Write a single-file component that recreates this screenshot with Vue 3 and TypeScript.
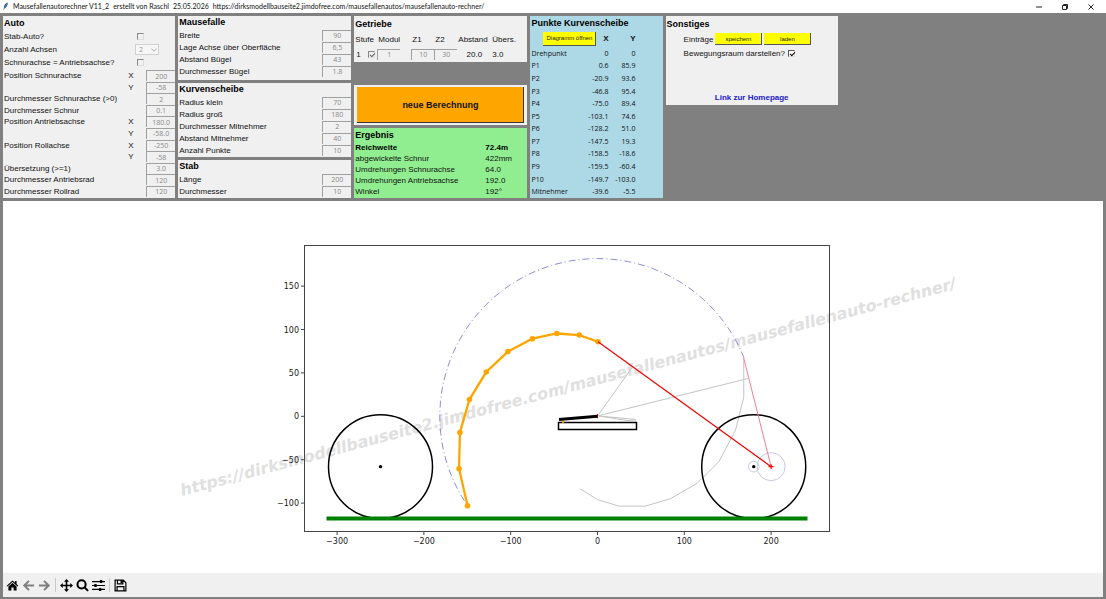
<script setup lang="ts">
import { ref } from 'vue'

interface Field {
  id: string
  label: string
  axis?: string
  value: string
}

interface Result {
  label: string
  value: string
  strong?: boolean
}

type Point = [number, number]

const auto = ref<Field[]>([
  { id: 'schnur-x', label: 'Position Schnurachse', axis: 'X', value: '200' },
  { id: 'schnur-y', label: '', axis: 'Y', value: '-58' },
  { id: 'd-schnurachse', label: 'Durchmesser Schnurachse (>0)', value: '2' },
  { id: 'd-schnur', label: 'Durchmesser Schnur', value: '0.1' },
  { id: 'antrieb-x', label: 'Position Antriebsachse', axis: 'X', value: '180.0' },
  { id: 'antrieb-y', label: '', axis: 'Y', value: '-58.0' },
  { id: 'roll-x', label: 'Position Rollachse', axis: 'X', value: '-250' },
  { id: 'roll-y', label: '', axis: 'Y', value: '-58' },
  { id: 'uebersetzung', label: 'Übersetzung (>=1)', value: '3.0' },
  { id: 'd-antrieb', label: 'Durchmesser Antriebsrad', value: '120' },
  { id: 'd-roll', label: 'Durchmesser Rollrad', value: '120' },
])

const groups = ref<{ title: string; fields: Field[] }[]>([
  {
    title: 'Mausefalle',
    fields: [
      { id: 'breite', label: 'Breite', value: '90' },
      { id: 'lage', label: 'Lage Achse über Oberfläche', value: '6,5' },
      { id: 'abstand-buegel', label: 'Abstand Bügel', value: '43' },
      { id: 'd-buegel', label: 'Durchmesser Bügel', value: '1.8' },
    ],
  },
  {
    title: 'Kurvenscheibe',
    fields: [
      { id: 'r-klein', label: 'Radius klein', value: '70' },
      { id: 'r-gross', label: 'Radius groß', value: '180' },
      { id: 'd-mitnehmer', label: 'Durchmesser Mitnehmer', value: '2' },
      { id: 'a-mitnehmer', label: 'Abstand Mitnehmer', value: '40' },
      { id: 'punkte', label: 'Anzahl Punkte', value: '10' },
    ],
  },
  {
    title: 'Stab',
    fields: [
      { id: 'laenge', label: 'Länge', value: '200' },
      { id: 'd-stab', label: 'Durchmesser', value: '10' },
    ],
  },
])

const results: Result[] = [
  { label: 'Reichweite', value: '72.4m', strong: true },
  { label: 'abgewickelte Schnur', value: '422mm' },
  { label: 'Umdrehungen Schnurachse', value: '64.0' },
  { label: 'Umdrehungen Antriebsachse', value: '192.0' },
  { label: 'Winkel', value: '192°' },
]

const curve: Point[] = [
  [0.6, 85.9],
  [-20.9, 93.6],
  [-46.8, 95.4],
  [-75.0, 89.4],
  [-103.1, 74.6],
  [-128.2, 51.0],
  [-147.5, 19.3],
  [-158.5, -18.6],
  [-159.5, -60.4],
  [-149.7, -103.0],
]

const rows = [
  { name: 'Drehpunkt', x: '0', y: '0' },
  ...curve.map(([x, y], i) => ({ name: `P${i + 1}`, x: x.toFixed(1), y: y.toFixed(1) })),
  { name: 'Mitnehmer', x: '-39.6', y: '-5.5' },
]

const stabAuto = ref(false)
const gleicheAchse = ref(false)
const achsen = ref('2')
const stufe = ref(true)
const modul = ref('1')
const z1 = ref('10')
const z2 = ref('30')
const bewegungsraum = ref(true)

/* Data units to drawing units */
const scale = 0.868
const px = (x: number): number => 594.5 + x * scale
const py = (y: number): number => 215.3 - y * scale
const line = (pts: Point[]): string => pts.map(([x, y]) => `${px(x)},${py(y)}`).join(' ')

const xTicks = [-300, -200, -100, 0, 100, 200]
const yTicks = [150, 100, 50, 0, -50, -100]
const tickText = (n: number): string => (n < 0 ? `\u2212${-n}` : `${n}`)

const armRange: Point[] = [
  [168.5, 67], [168.5, 22], [159, -16], [140, -52], [115, -77],
  [84, -95], [55, -103.5], [25, -103.5], [0, -96], [-20, -83.5],
]

/* Path of the outermost point while the disc turns around the origin */
const sweep: Point[] = Array.from({ length: 65 }, (_, i) => {
  const a = ((21.7 + i * 3) * Math.PI) / 180
  return [181.7 * Math.cos(a), 181.7 * Math.sin(a)]
})
</script>

<template>
  <div class="window">
    <header class="titlebar">
      <svg class="feather" viewBox="0 0 8 10" aria-hidden="true">
        <path d="M6.6.4C4 1.200 2 3.600 2 6.800L1.600 9.600 2.600 7.600C5 6.600 6.800 3.400 6.600.4Z" fill="#1d4f86" />
        <path d="M5.800 1.600 2.400 7.400" stroke="#9cc3e8" stroke-width=".5" />
      </svg>
      <span class="app-name">Mausefallenautorechner V11_2</span>
      <span class="app-author">erstellt von Raschl</span>
      <span class="app-date">25.05.2026</span>
      <span>https://dirksmodellbauseite2.jimdofree.com/mausefallenautos/mausefallenauto-rechner/</span>
      <div class="controls">
        <button type="button" aria-label="Minimieren">
          <svg viewBox="0 0 8 8"><path d="M1 4H7" /></svg>
        </button>
        <button type="button" aria-label="Wiederherstellen">
          <svg viewBox="0 0 8 8"><path d="M1.500 2.500H5.500V6.500H1.500ZM2.500 2.500V1.500H6.500V5.500H5.500" /></svg>
        </button>
        <button type="button" aria-label="Schließen">
          <svg viewBox="0 0 8 8"><path d="M1.500 1.500 6.500 6.500M6.500 1.500 1.500 6.500" /></svg>
        </button>
      </div>
    </header>

    <main class="panels">
      <section class="panel auto">
        <h2>Auto</h2>
        <div class="row option">
          <label for="stab-auto">Stab-Auto?</label>
          <input id="stab-auto" v-model="stabAuto" class="tick dim" type="checkbox" />
        </div>
        <div class="row option">
          <label for="achsen">Anzahl Achsen</label>
          <span class="combo">
            <select id="achsen" v-model="achsen">
              <option>2</option>
              <option>3</option>
            </select>
            <svg viewBox="0 0 6 4" aria-hidden="true"><path d="M.5.8 3 3.200 5.500.8" /></svg>
          </span>
        </div>
        <div class="row option">
          <label for="gleich">Schnurachse = Antriebsachse?</label>
          <input id="gleich" v-model="gleicheAchse" class="tick dim" type="checkbox" />
        </div>
        <div class="auto-fields">
          <div v-for="f in auto" :key="f.id" class="row">
            <label :for="f.id" class="grow">{{ f.label }}</label>
            <label v-if="f.axis" :for="f.id" class="axis">{{ f.axis }}</label>
            <input :id="f.id" v-model="f.value" class="entry" type="text" />
          </div>
        </div>
      </section>

      <div class="column">
        <section v-for="g in groups" :key="g.title" class="panel group">
          <h2>{{ g.title }}</h2>
          <div v-for="f in g.fields" :key="f.id" class="row">
            <label :for="f.id" class="grow">{{ f.label }}</label>
            <input :id="f.id" v-model="f.value" class="entry" type="text" />
          </div>
        </section>
      </div>

      <div class="column">
        <section class="panel gears">
          <h2>Getriebe</h2>
          <table>
            <colgroup>
              <col class="c-stufe" /><col class="c-modul" /><col class="c-z" /><col class="c-z" /><col class="c-abstand" /><col />
            </colgroup>
            <thead>
              <tr>
                <th>Stufe</th>
                <th>Modul</th>
                <th>Z1</th>
                <th>Z2</th>
                <th>Abstand</th>
                <th>Übers.</th>
              </tr>
            </thead>
            <tbody>
              <tr>
                <td><label class="stage">1 <input v-model="stufe" class="tick soft" type="checkbox" /></label></td>
                <td><input v-model="modul" class="entry" type="text" aria-label="Modul" /></td>
                <td><input v-model="z1" class="entry" type="text" aria-label="Z1" /></td>
                <td><input v-model="z2" class="entry" type="text" aria-label="Z2" /></td>
                <td class="mid">20.0</td>
                <td>3.0</td>
              </tr>
            </tbody>
          </table>
        </section>

        <div class="panel action">
          <button type="button" class="calc">neue Berechnung</button>
        </div>

        <section class="panel result">
          <h2>Ergebnis</h2>
          <dl>
            <div v-for="r in results" :key="r.label" :class="{ strong: r.strong }">
              <dt>{{ r.label }}</dt>
              <dd>{{ r.value }}</dd>
            </div>
          </dl>
        </section>
      </div>

      <section class="panel points">
        <h2>Punkte Kurvenscheibe</h2>
        <table>
          <colgroup>
            <col class="p-name" /><col class="p-gap" /><col class="p-x" /><col class="p-y" /><col />
          </colgroup>
          <thead>
            <tr>
              <th colspan="2"><button type="button" class="yellow">Diagramm öffnen</button></th>
              <th>X</th>
              <th>Y</th>
              <td></td>
            </tr>
          </thead>
          <tbody>
            <tr v-for="r in rows" :key="r.name">
              <th scope="row">{{ r.name }}</th>
              <td colspan="2">{{ r.x }}</td>
              <td>{{ r.y }}</td>
              <td></td>
            </tr>
          </tbody>
        </table>
      </section>

      <section class="panel misc">
        <h2>Sonstiges</h2>
        <div class="misc-row">
          <span>Einträge</span>
          <button type="button" class="yellow wide">speichern</button>
          <button type="button" class="yellow wide">laden</button>
        </div>
        <div class="misc-row">
          <label for="raum">Bewegungsraum darstellen?</label>
          <input id="raum" v-model="bewegungsraum" class="tick" type="checkbox" />
        </div>
        <a href="#homepage">Link zur Homepage</a>
      </section>
    </main>

    <section class="plot">
      <svg class="chart" viewBox="0 0 1100 372" role="img" aria-label="Mausefallenauto">
        <text class="watermark" transform="translate(179 295) rotate(-15)">https://dirksmodellbauseite2.jimdofree.com/mausefallenautos/mausefallenauto-rechner/</text>

        <g class="thin">
          <polyline :points="line(armRange)" />
          <path d="M594.500 215 629 166.700M594.500 215 745 177.500M596 215 633 218.500M596 215 624 219.500 633 219" />
        </g>
        <polyline class="reach" :points="line(sweep)" />

        <g class="wheel">
          <circle :cx="px(-250)" :cy="py(-58)" r="52" />
          <circle :cx="px(180)" :cy="py(-58)" r="52" />
        </g>
        <circle :cx="px(-250)" :cy="py(-58)" r="1.700" />
        <circle :cx="px(180)" :cy="py(-58)" r="1.700" />
        <g class="gear">
          <circle :cx="px(180)" :cy="py(-58)" r="5.300" />
          <circle :cx="px(200)" :cy="py(-58)" r="14" />
        </g>
        <path class="ground" d="M323.500 317.500H804.500" />

        <rect class="base" x="555.500" y="221.500" width="78" height="7" />
        <circle cx="560" cy="220.700" r="1.300" fill="orange" />
        <path class="bail" d="M556 218.500 594.500 215.200" />
        <path d="M594.500 213.200V217.200" stroke="#800" stroke-width="1" />

        <polyline class="disc" :points="line(curve)" />
        <circle v-for="(p, i) in curve" :key="i" :cx="px(p[0])" :cy="py(p[1])" r="2.800" fill="orange" />

        <polyline class="cord faint" :points="line([[168.5, 67], [200, -58]])" />
        <polyline class="cord" :points="line([[0.6, 85.9], [200, -58]])" />
        <path class="cross" :d="`M${px(200) - 2.5} ${py(-58)}h5m-2.500-2.500v5`" />

        <rect class="frame" x="301.500" y="44.500" width="525" height="286" />
        <g v-for="t in xTicks" :key="`x${t}`" class="tick-mark">
          <path :d="`M${px(t)} 331v3`" />
          <text :x="px(t)" y="343" text-anchor="middle">{{ tickText(t) }}</text>
        </g>
        <g v-for="t in yTicks" :key="`y${t}`" class="tick-mark">
          <path :d="`M301 ${py(t)}h-3`" />
          <text x="296" :y="py(t) + 3" text-anchor="end">{{ tickText(t) }}</text>
        </g>
      </svg>

      <nav class="toolbar" aria-label="Diagramm">
        <button type="button" aria-label="Ausgangsansicht">
          <svg viewBox="0 0 14 14"><path d="M7 1.500 .8 7.200 1.600 8 7 3.200 12.400 8 13.200 7.200 11.400 5.500V2.200H9.800V4ZM7 4.200 2.600 8.100V12.500H5.800V9.200H8.200V12.500H11.400V8.100Z" /></svg>
        </button>
        <button type="button" aria-label="Zurück" class="off">
          <svg viewBox="0 0 14 14"><path class="ln" d="M13 7H3M7.500 2 2.500 7 7.500 12" /></svg>
        </button>
        <button type="button" aria-label="Vor" class="off">
          <svg viewBox="0 0 14 14"><path class="ln" d="M1 7H11M6.500 2 11.500 7 6.500 12" /></svg>
        </button>
        <i></i>
        <button type="button" aria-label="Verschieben">
          <svg viewBox="0 0 14 14"><path d="M7 0 9.700 3H7.900V6.100H11V4.300L14 7 11 9.700V7.900H7.900V11H9.700L7 14 4.300 11H6.100V7.900H3V9.700L0 7 3 4.300V6.100H6.100V3H4.300Z" /></svg>
        </button>
        <button type="button" aria-label="Zoom">
          <svg viewBox="0 0 14 14"><circle class="ln" cx="6" cy="5.800" r="4.400" /><path class="ln" d="M9.200 9 13 12.800" /></svg>
        </button>
        <button type="button" aria-label="Einstellungen">
          <svg viewBox="0 0 14 14"><path d="M0 2.200H14V3.400H0ZM0 6.400H14V7.600H0ZM0 10.600H14V11.800H0ZM8.500 1.200H11V4.400H8.500ZM2.500 5.400H5V8.600H2.500ZM7.500 9.600H10V12.800H7.500Z" /></svg>
        </button>
        <i></i>
        <button type="button" aria-label="Speichern">
          <svg viewBox="0 0 14 14"><path class="th" d="M1.200 1.200H10L12.800 4V12.800H1.200ZM3.700 1.200V5.200H9.500V1.200M3.300 12.800V8.300H10.700V12.800" /><path d="M7 1.500H9V4.500H7Z" /></svg>
        </button>
      </nav>
    </section>
  </div>
</template>

<style>
body {
  margin: 0;
  background: #808080;
}
</style>

<style scoped>
* {
  box-sizing: border-box;
}

.window {
  display: flex;
  flex-direction: column;
  min-height: 100vh;
  background: #808080;
  color: #111;
  font: 8px/11px "Liberation Sans", Arial, sans-serif;
  white-space: nowrap;
}

button,
input,
select {
  margin: 0;
  padding: 0;
  border: 0;
  border-radius: 0;
  font: inherit;
  color: inherit;
}

/* Title bar */
.titlebar {
  display: flex;
  align-items: center;
  height: 13px;
  padding-left: 2px;
  background: #fff;
  font: 7px/13px Lato, "Open Sans", sans-serif;
}

.feather {
  width: 7px;
  height: 9px;
  margin-right: 4px;
}

.app-name,
.app-author,
.app-date {
  margin-right: 4px;
}

.controls {
  display: flex;
  gap: 18px;
  margin-left: auto;
  padding-right: 11px;
}

.controls button {
  display: grid;
  width: 8px;
  height: 12px;
  place-items: center;
  background: none;
}

.controls svg {
  width: 8px;
  height: 8px;
  fill: none;
  stroke: #222;
  stroke-width: 1;
}

/* Panels */
.panels {
  display: grid;
  grid-template-columns: 172fr 173fr 173fr 132fr 172fr 262fr;
  gap: 3px;
  padding: 3px;
  min-height: 188px;
}

.panel {
  background: #f0f0f0;
}

.panel h2 {
  margin: 0;
  padding-left: 1px;
  font: bold 9px/14px "Liberation Sans", Arial, sans-serif;
  color: #000;
}

.row {
  display: flex;
  align-items: center;
  padding-left: 1px;
}

.grow {
  flex: 1;
}

.axis {
  width: 18px;
}

.entry {
  width: 29px;
  height: 11px;
  border-top: 1px solid #a0a0a0;
  border-left: 1px solid #a0a0a0;
  background: #f0f0f0;
  color: #8a8a8a;
  font: 7px/10px "Open Sans", "Noto Sans", sans-serif;
  text-align: center;
}

.auto {
  display: flex;
  flex-direction: column;
  padding-bottom: 1px;
}

.option {
  height: 13px;
}

.option label {
  flex: 0 0 131px;
}

.option .tick {
  margin-left: 2px;
}

.auto-fields {
  display: grid;
  flex: 1;
  grid-auto-rows: 1fr;
  padding-top: 1px;
}

.tick {
  flex: none;
  appearance: none;
  width: 7px;
  height: 7px;
  border-top: 1px solid #555;
  border-left: 1px solid #555;
  border-right: 1px solid #ddd;
  border-bottom: 1px solid #ddd;
  background: #fff;
}

.tick.dim,
.tick.soft {
  border-top-color: #888;
  border-left-color: #888;
  background: #f0f0f0;
}

.tick:checked::before {
  content: "";
  display: block;
  width: 4px;
  height: 2px;
  margin: 1px 0 0 1px;
  border: solid #000;
  border-width: 0 0 1px 1px;
  transform: rotate(-45deg);
}

.tick.soft:checked::before {
  border-color: #666;
}

.combo {
  position: relative;
  display: flex;
}

.combo select {
  appearance: none;
  width: 24px;
  height: 11px;
  padding-left: 3px;
  border: 1px solid #d0d0d0;
  background: #f6f6f6;
  color: #999;
  font: 7px/9px "Open Sans", sans-serif;
}

.combo svg {
  position: absolute;
  right: 2px;
  top: 4px;
  width: 6px;
  height: 4px;
  fill: none;
  stroke: #aaa;
  pointer-events: none;
}

.column {
  display: flex;
  flex-direction: column;
  gap: 3px;
}

.group {
  flex: none;
  padding-bottom: 1px;
}

.group h2 {
  line-height: 13px;
}

.group .row {
  height: 12px;
}

.group:first-child {
  padding-bottom: 3px;
}

.group:last-child {
  flex: 1;
}

/* Gears */
table {
  width: 100%;
  border-collapse: collapse;
  table-layout: fixed;
}

th,
td {
  padding: 0;
  font-weight: normal;
  text-align: left;
}

.gears h2 {
  line-height: 16px;
}

.gears th {
  height: 14px;
  padding-left: 1px;
}

.gears td {
  height: 16px;
}

.c-stufe {
  width: 23px;
}

.c-modul {
  width: 34px;
}

.c-z {
  width: 23px;
}

.c-abstand {
  width: 34px;
}

.gears td .entry {
  display: block;
  width: 23px;
}

.gears .mid {
  text-align: center;
}

.gears td:last-child {
  padding-left: 1px;
}

.stage {
  display: flex;
  align-items: center;
  gap: 7px;
  padding-left: 2px;
}

/* Action */
.action {
  margin-top: auto;
  padding: 2px 3px;
}

.calc {
  display: block;
  width: 100%;
  height: 36px;
  border-right: 1px solid #333;
  border-bottom: 1px solid #333;
  background: orange;
  color: #111;
  font: bold 9px/12px "Liberation Sans", Arial, sans-serif;
}

/* Result */
.result {
  padding-bottom: 1px;
  background: #90ee90;
}

dl {
  margin: 0;
}

dl div {
  display: flex;
  height: 11px;
  padding-left: 1px;
}

dt {
  flex: 0 0 130px;
}

dd {
  margin: 0;
}

.strong {
  font-weight: bold;
  color: #000;
}

/* Points */
.points {
  display: flex;
  flex-direction: column;
  background: #add8e6;
}

.points table {
  flex: 1;
  height: 168px;
}

.points thead tr {
  height: 17px;
}

.points thead th {
  font-weight: bold;
  text-align: right;
}

.p-name {
  width: 44px;
}

.p-gap {
  width: 22px;
}

.p-x {
  width: 12px;
}

.p-y {
  width: 27px;
}

.points tbody th {
  padding-left: 1px;
}

.points tbody th,
.points tbody td {
  font: 7px/11px "Open Sans", "Noto Sans", sans-serif;
}

.points tbody td {
  text-align: right;
}

.yellow {
  width: 53px;
  height: 14px;
  border-right: 1px solid #555;
  border-bottom: 1px solid #555;
  background: #ff0;
  color: #222;
  font: 6px/10px "Liberation Sans", Arial, sans-serif;
  vertical-align: middle;
}

.yellow.wide {
  width: 47px;
  height: 12px;
}

/* Misc */
.misc {
  align-self: start;
  display: flex;
  flex-direction: column;
  padding-bottom: 2px;
}

.misc h2 {
  line-height: 16px;
}

.misc-row {
  display: flex;
  align-items: center;
  gap: 2px;
  height: 14px;
  padding-left: 18px;
}

.misc-row .tick {
  margin-left: 1px;
}

.misc a {
  align-self: center;
  margin-top: 32px;
  color: #2020d0;
  font-weight: bold;
  text-decoration: none;
}

/* Plot */
.plot {
  display: flex;
  flex: 1;
  flex-direction: column;
  margin: 0 3px 2px;
  background: #fff;
}

.chart {
  display: block;
  flex: 1;
  width: 100%;
  min-height: 0;
}

.watermark {
  fill: #e0e0e0;
  font: italic bold 16px "DejaVu Sans", sans-serif;
}

.thin {
  fill: none;
  stroke: #c4c4c4;
  stroke-width: 1;
}

.reach {
  fill: none;
  stroke: #8c8cd8;
  stroke-width: 1;
  stroke-dasharray: 7 3 1 3;
}

.wheel circle {
  fill: none;
  stroke: #000;
  stroke-width: 1.5;
}

.gear circle {
  fill: none;
  stroke: #c6c6ee;
  stroke-width: 1;
}

.ground {
  stroke: #008000;
  stroke-width: 4;
}

.base {
  fill: #fff;
  stroke: #000;
  stroke-width: 1.5;
}

.bail {
  stroke: #000;
  stroke-width: 3;
}

.disc {
  fill: none;
  stroke: orange;
  stroke-width: 2.3;
}

.cord {
  fill: none;
  stroke: #f00000;
  stroke-width: 1.2;
}

.cord.faint {
  stroke: #f08090;
  stroke-width: 1;
}

.cross {
  stroke: #f00;
  stroke-width: 1.2;
}

.frame {
  fill: none;
  stroke: #444;
  stroke-width: 1;
}

.tick-mark path {
  stroke: #444;
  stroke-width: 1;
}

.tick-mark text {
  fill: #222;
  font: 8px "DejaVu Sans", sans-serif;
}

/* Toolbar */
.toolbar {
  display: flex;
  align-items: center;
  gap: 3px;
  height: 24px;
  padding-left: 3px;
  background: #f0f0f0;
}

.toolbar button {
  display: grid;
  width: 13px;
  height: 16px;
  place-items: center;
  background: none;
  color: #000;
}

.toolbar .off {
  color: #808080;
}

.toolbar svg {
  width: 13px;
  height: 13px;
  fill: currentColor;
}

.toolbar .ln {
  fill: none;
  stroke: currentColor;
  stroke-width: 2.2;
}

.toolbar .th {
  fill: none;
  stroke: currentColor;
  stroke-width: 1.3;
}

.toolbar i {
  width: 1px;
  height: 14px;
  margin: 0 1px;
  background: #c8c8c8;
}
</style>
